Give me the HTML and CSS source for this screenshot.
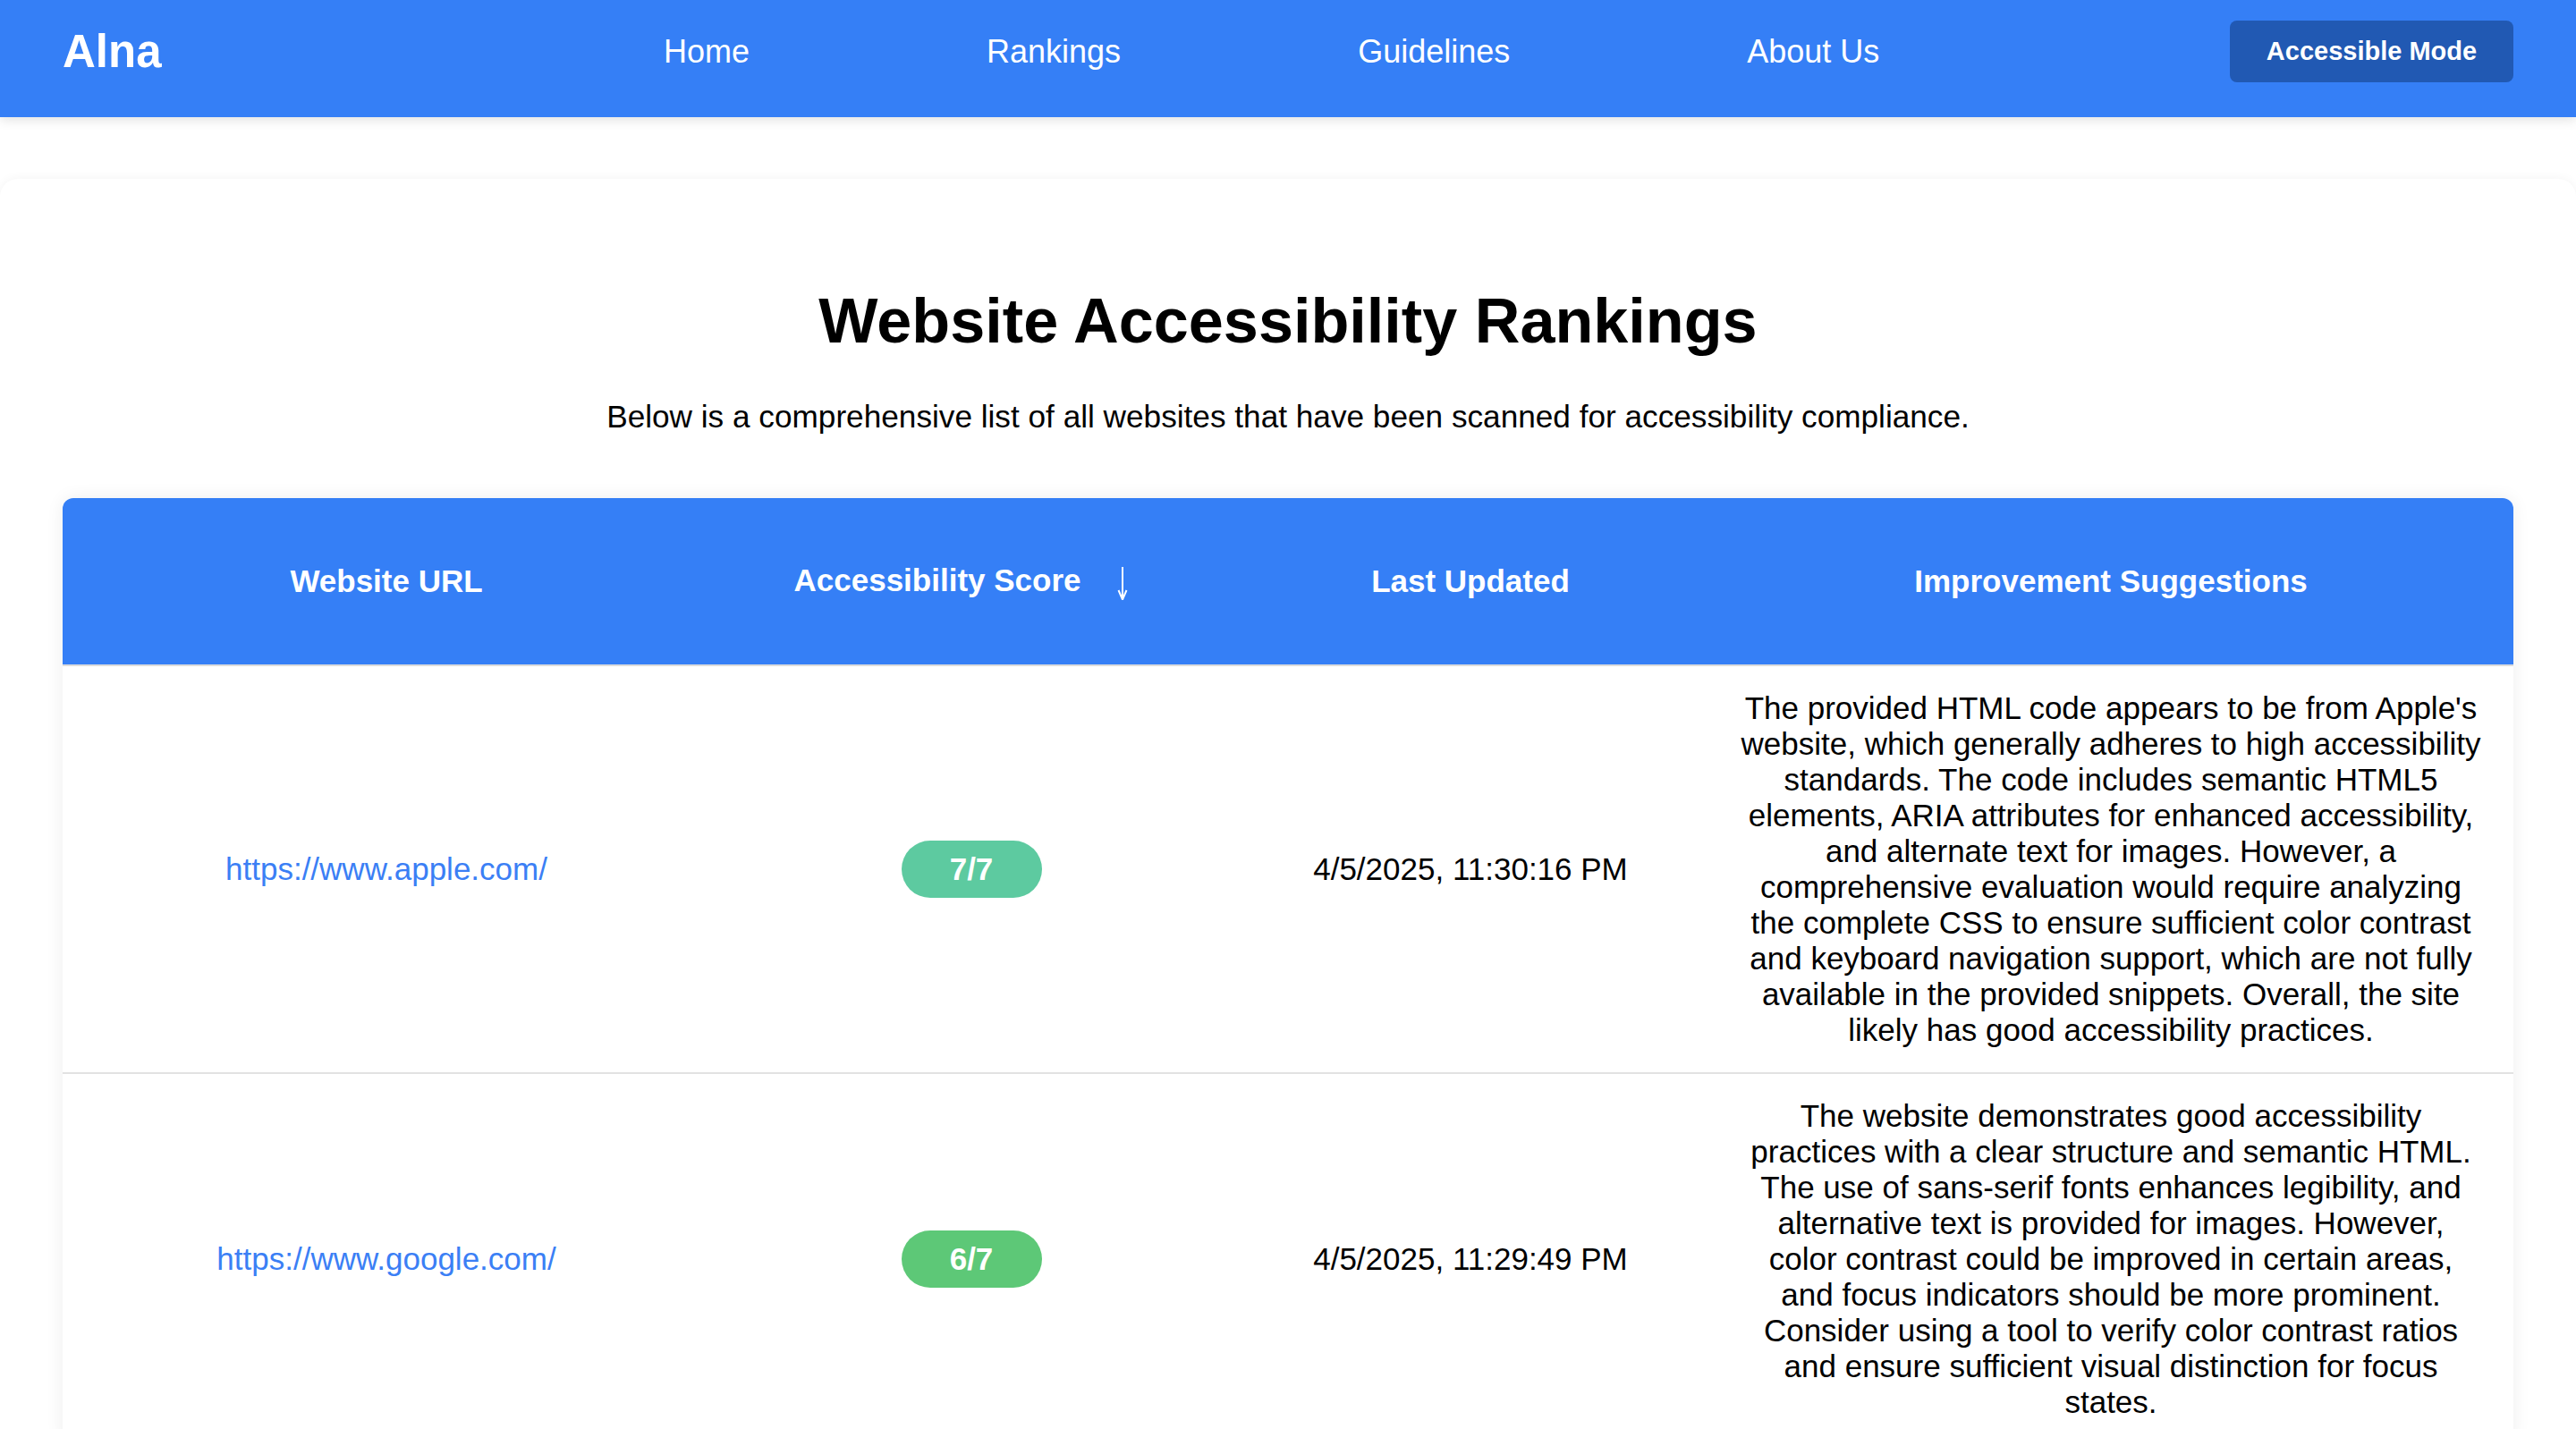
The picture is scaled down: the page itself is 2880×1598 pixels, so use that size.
FILE: index.html
```html
<!DOCTYPE html>
<html lang="en">
<head>
<meta charset="utf-8">
<title>Alna - Website Accessibility Rankings</title>
<link rel="stylesheet" href="styles.css">
</head>
<body>
<header class="navbar">
  <div class="brand">Alna</div>
  <nav class="nav-links">
    <a href="#" class="nav-link">Home</a>
    <a href="#" class="nav-link">Rankings</a>
    <a href="#" class="nav-link">Guidelines</a>
    <a href="#" class="nav-link">About Us</a>
  </nav>
  <button class="mode-btn" type="button">Accessible Mode</button>
</header>

<main class="page-card">
  <h1 class="page-title">Website Accessibility Rankings</h1>
  <p class="page-subtitle">Below is a comprehensive list of all websites that have been scanned for accessibility compliance.</p>

  <div class="table-wrap">
    <table class="rank-table">
      <colgroup>
        <col class="col-url">
        <col class="col-score">
        <col class="col-date">
        <col class="col-sugg">
      </colgroup>
      <thead>
        <tr>
          <th>Website URL</th>
          <th><span class="th-label">Accessibility Score</span><span class="sort-icon"><svg width="16" height="38" viewBox="0 0 16 38" aria-hidden="true"><path d="M8 1 V36" stroke="#fff" stroke-width="2" fill="none"/><path d="M3.5 27 L8 37.5 L12.5 27" stroke="#fff" stroke-width="2" fill="none" stroke-linejoin="miter"/></svg></span></th>
          <th>Last Updated</th>
          <th>Improvement Suggestions</th>
        </tr>
      </thead>
      <tbody>
        <tr>
          <td><a href="#" class="site-link">https://www.apple.com/</a></td>
          <td><span class="score score-7">7/7</span></td>
          <td>4/5/2025, 11:30:16 PM</td>
          <td class="sugg">The provided HTML code appears to be from Apple's website, which generally adheres to high accessibility standards. The code includes semantic HTML5 elements, ARIA attributes for enhanced accessibility, and alternate text for images. However, a comprehensive evaluation would require analyzing the complete CSS to ensure sufficient color contrast and keyboard navigation support, which are not fully available in the provided snippets. Overall, the site likely has good accessibility practices.</td>
        </tr>
        <tr>
          <td><a href="#" class="site-link">https://www.google.com/</a></td>
          <td><span class="score score-6">6/7</span></td>
          <td>4/5/2025, 11:29:49 PM</td>
          <td class="sugg">The website demonstrates good accessibility practices with a clear structure and semantic HTML. The use of sans-serif fonts enhances legibility, and alternative text is provided for images. However, color contrast could be improved in certain areas, and focus indicators should be more prominent. Consider using a tool to verify color contrast ratios and ensure sufficient visual distinction for focus states.</td>
        </tr>
      </tbody>
    </table>
  </div>
</main>
</body>
</html>
```

FILE: styles.css
```css
html, body {
  margin: 0;
  padding: 0;
  background: #ffffff;
}

body {
  font-family: "Liberation Sans", Arial, Helvetica, sans-serif;
  color: #111111;
}

.navbar {
  position: relative;
  z-index: 2;
  display: flex;
  align-items: center;
  height: 69px;
  padding: 23px 70px 39px 70px;
  background: #357ff6;
  box-shadow: 0 3px 12px rgba(0, 0, 0, 0.12);
}

.brand {
  flex: 0 0 672px;
  font-size: 51px;
  font-weight: 700;
  color: #ffffff;
  line-height: 1;
}

.nav-links {
  display: flex;
  align-items: center;
  gap: 265px;
}

.nav-link {
  font-size: 36px;
  color: #ffffff;
  text-decoration: none;
  line-height: 1.15;
}

.mode-btn {
  margin-left: auto;
  height: 69px;
  width: 317px;
  padding: 0;
  border: none;
  border-radius: 8px;
  background: #2159b3;
  color: #ffffff;
  font-family: "Liberation Sans", Arial, Helvetica, sans-serif;
  font-size: 29px;
  font-weight: 700;
}

.page-card {
  margin-top: 69px;
  padding: 119px 70px 80px 70px;
  background: #ffffff;
  border-radius: 20px;
  box-shadow: 0 0 12px rgba(0, 0, 0, 0.05);
}

.page-title {
  margin: 0;
  text-align: center;
  font-size: 70.2px;
  font-weight: 700;
  line-height: 80px;
  color: #000000;
}

.page-subtitle {
  margin: 47px 0 0 0;
  text-align: center;
  font-size: 35.2px;
  line-height: 40px;
  color: #000000;
}

.table-wrap {
  margin-top: 71px;
  border-radius: 12px;
  overflow: hidden;
  box-shadow: 0 0 20px rgba(0, 0, 0, 0.07);
}

.rank-table {
  width: 100%;
  table-layout: fixed;
  border-collapse: collapse;
  font-size: 35px;
  line-height: 40px;
}

.col-url { width: 724px; }
.col-score { width: 584px; }
.col-date { width: 532px; }
.col-sugg { width: 900px; }

.rank-table thead th {
  background: #357ff6;
  color: #ffffff;
  font-weight: 700;
  padding: 72px 20px 72px 20px;
  border-bottom: 2px solid #dcdcdc;
  text-align: center;
  white-space: nowrap;
}

.th-label {
  vertical-align: baseline;
}

.sort-icon {
  display: inline-block;
  width: 16px;
  height: 38px;
  margin-left: 38px;
  margin-right: 22px;
  vertical-align: -10px;
}

.sort-icon svg {
  display: block;
}

.rank-table tbody td {
  padding: 27px 36px;
  text-align: center;
  vertical-align: middle;
  color: #000000;
  border-bottom: 2px solid #e2e2e2;
}

.site-link {
  color: #3b7ff5;
  text-decoration: none;
}

.score {
  display: inline-block;
  width: 157px;
  height: 64px;
  line-height: 64px;
  border-radius: 32px;
  color: #ffffff;
  font-weight: 700;
}

.score-7 { background: #5dcaa0; }
.score-6 { background: #5dc877; }

.sugg {
  color: #000000;
}
```
